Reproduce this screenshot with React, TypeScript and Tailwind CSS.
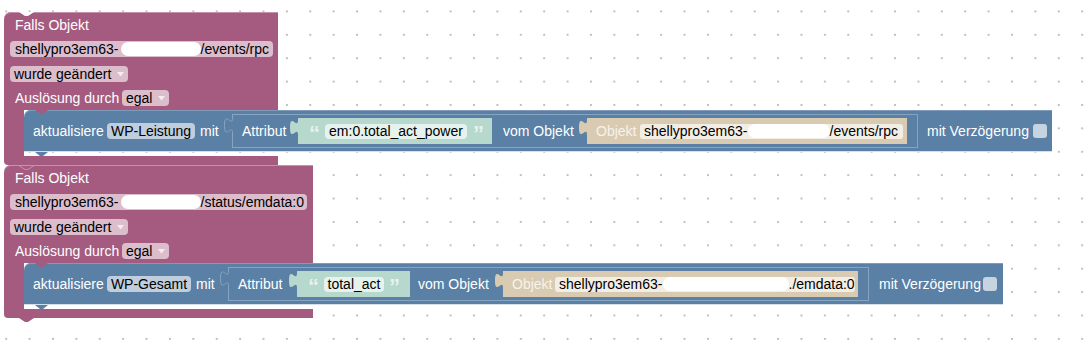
import React from "react";

function Arrow() {
  return (
    <svg width="7" height="5" viewBox="0 0 7 5" className="ml-[6px] shrink-0">
      <polygon points="0,0 7,0 3.5,4.5" fill="#f5ebf0" />
    </svg>
  );
}

function Blob({ className }: { className: string }) {
  return <span className={`inline-block h-[14px] shrink-0 rounded-full bg-white blur-[0.7px] ${className}`} />;
}

function PuzzleTab({ fill, stroke, className }: { fill: string; stroke?: string; className: string }) {
  return (
    <svg width="9" height="15" viewBox="0 0 9 15" className={`absolute overflow-visible ${className}`}>
      <path d="M9 0 H8 C8 10 0 -8 0 7.5 S8 5 8 15 H9 Z" fill={fill} />
      {stroke ? <path d="M8.5 0 C8.5 10 0.5 -8 0.5 7.5 S8.5 5 8.5 15" fill="none" stroke={stroke} strokeWidth="1" /> : null}
    </svg>
  );
}

function Trigger({
  widthClass,
  field,
  action,
  first,
}: {
  widthClass: string;
  field: React.ReactNode;
  action: React.ReactNode;
  first: boolean;
}) {
  return (
    <div className={`relative shrink-0 ${widthClass}`}>
      <div className="relative flex flex-col rounded-tl-[7px] bg-[#a55b80] pb-[4px] pt-[5px] shadow-[inset_0_1px_0_#c592ac]">
        {first ? (
          <svg width="15" height="4" viewBox="0 0 15 4" className="absolute left-[15px] top-0">
            <polygon points="0,0 6,4 9,4 15,0" fill="#ffffff" />
          </svg>
        ) : (
          <svg width="15" height="5" viewBox="0 0 15 5" className="absolute left-[15px] top-0">
            <polyline points="0,0.5 6,4.5 9,4.5 15,0.5" fill="none" stroke="#c592ac" strokeWidth="1" />
          </svg>
        )}
        <div className="h-[16px] pl-[11px]">Falls Objekt</div>
        <div className="mt-[8px] flex pl-[6px]">{field}</div>
        <div className="mt-[9px] flex pl-[6px]">
          <span className="flex h-[16px] items-center rounded-[4px] bg-[#dbbdcc] px-[4px] text-black">
            wurde geändert
            <Arrow />
          </span>
        </div>
        <div className="mt-[8px] flex h-[16px] items-center pl-[11px]">
          <span className="w-[107px] shrink-0 whitespace-nowrap">Auslösung durch</span>
          <span className="flex h-[16px] items-center rounded-[4px] bg-[#dbbdcc] px-[4px] text-black">
            egal
            <Arrow />
          </span>
        </div>
      </div>
      <div className="flex">
        <div className="w-[20px] shrink-0 bg-[#a55b80]" />
        <div className="flex shrink-0 flex-col">
          {action}
          <div className="h-[4px]" />
        </div>
      </div>
      <div className="relative h-[9px] rounded-bl-[4px] bg-[#a55b80]">
        {!first ? (
          <svg width="15" height="4" viewBox="0 0 15 4" className="absolute bottom-[-4px] left-[15px]">
            <polygon points="0,0 6,4 9,4 15,0" fill="#a55b80" />
          </svg>
        ) : null}
      </div>
    </div>
  );
}

function BlueShell({ widthClass, children }: { widthClass: string; children: React.ReactNode }) {
  return (
    <div
      className={`relative flex h-[42px] shrink-0 items-center whitespace-nowrap rounded-tl-[7px] bg-[#5b80a5] pl-[9px] shadow-[inset_0_1px_0_#7e9cba,inset_0_-1px_0_#d5dfe9] ${widthClass}`}
    >
      <svg width="13" height="4" viewBox="0 0 13 4" className="absolute left-[11px] top-0">
        <polygon points="0,0 5,4 8,4 13,0" fill="#a55b80" />
      </svg>
      <svg width="13" height="4" viewBox="0 0 13 4" className="absolute bottom-[-4px] left-[11px]">
        <polygon points="0,0 5,4 8,4 13,0" fill="#5b80a5" />
      </svg>
      {children}
    </div>
  );
}

function Quote({ children, className }: { children: React.ReactNode; className: string }) {
  return (
    <span
      className={`flex h-[16px] shrink-0 items-start overflow-visible font-['Liberation_Sans',Arial,sans-serif] text-[22px] font-bold leading-[22px] text-[#e6f2ed] ${className}`}
    >
      {children}
    </span>
  );
}

export default function App() {
  return (
    <div className="relative flex h-[342px] w-[1091px] flex-col overflow-hidden bg-white bg-[radial-gradient(circle,#bfbfbf_0.9px,transparent_1.4px)] bg-[length:23.4px_23.4px] bg-[position:-5.5px_-0.3px] pl-[4px] pt-[12px] font-['Liberation_Sans',Arial,sans-serif] text-[14px] leading-[16px] text-white">
      <Trigger
        first
        widthClass="w-[274px]"
        field={
          <span className="flex h-[16px] w-[263px] items-center whitespace-nowrap rounded-[4px] bg-[#dbbdcc] pl-[5px] text-black">
            <span>shellypro3em63-</span>
            <Blob className="ml-[2px] w-[80px]" />
            <span>/events/rpc</span>
          </span>
        }
        action={
          <BlueShell widthClass="w-[1028px]">
            <span className="w-[74px] shrink-0">aktualisiere</span>
            <span className="flex h-[16px] w-[88px] shrink-0 items-center justify-center rounded-[4px] bg-[#bfcddc] text-black">
              WP-Leistung
            </span>
            <span className="w-[37px] shrink-0 pl-[5px]">mit</span>
            <div className="relative flex h-[34px] w-[686px] shrink-0 items-center border border-[#87a4c1] bg-[#5b80a5] pl-[9px]">
              <PuzzleTab fill="#5b80a5" stroke="#87a4c1" className="left-[-9px] top-[3px]" />
              <span className="w-[56px] shrink-0">Attribut</span>
              <div className="relative flex h-[26px] w-[194px] shrink-0 items-center bg-[#b7d8cc] pl-[11px]">
                <PuzzleTab fill="#b7d8cc" className="left-[-8px] top-[2px]" />
                <Quote className="w-[16px]">“</Quote>
                <span className="flex h-[15px] w-[142px] shrink-0 items-center justify-center rounded-[4px] bg-[#e6f2ed] text-black">
                  em:0.total_act_power
                </span>
                <Quote className="pl-[6px]">”</Quote>
              </div>
              <span className="w-[95px] shrink-0 pl-[11px]">vom Objekt</span>
              <div className="relative flex h-[26px] w-[320px] shrink-0 items-center bg-[#d9cbb2] pl-[9px]">
                <PuzzleTab fill="#d9cbb2" className="left-[-8px] top-[2px]" />
                <span className="w-[44px] shrink-0 text-[#f7f2ea]">Objekt</span>
                <span className="flex h-[15px] w-[263px] shrink-0 items-center rounded-[3px] bg-[#f3eee5] pl-[4px] text-black">
                  <span>shellypro3em63-</span>
                  <Blob className="w-[82px]" />
                  <span>/events/rpc</span>
                </span>
              </div>
            </div>
            <span className="w-[115px] shrink-0 pl-[9px]">mit Verzögerung</span>
            <span className="h-[14px] w-[14px] shrink-0 rounded-[3px] bg-[#c6d3e1]" />
          </BlueShell>
        }
      />
      <Trigger
        first={false}
        widthClass="w-[309px]"
        field={
          <span className="flex h-[16px] w-[297px] items-center whitespace-nowrap rounded-[4px] bg-[#dbbdcc] pl-[5px] text-black">
            <span>shellypro3em63-</span>
            <Blob className="ml-[2px] w-[80px]" />
            <span>/status/emdata:0</span>
          </span>
        }
        action={
          <BlueShell widthClass="w-[979px]">
            <span className="w-[74px] shrink-0">aktualisiere</span>
            <span className="flex h-[16px] w-[84px] shrink-0 items-center justify-center rounded-[4px] bg-[#bfcddc] text-black">
              WP-Gesamt
            </span>
            <span className="w-[37px] shrink-0 pl-[5px]">mit</span>
            <div className="relative flex h-[34px] w-[641px] shrink-0 items-center border border-[#87a4c1] bg-[#5b80a5] pl-[9px]">
              <PuzzleTab fill="#5b80a5" stroke="#87a4c1" className="left-[-9px] top-[3px]" />
              <span className="w-[59px] shrink-0">Attribut</span>
              <div className="relative flex h-[26px] w-[113px] shrink-0 items-center bg-[#b7d8cc] pl-[11px]">
                <PuzzleTab fill="#b7d8cc" className="left-[-8px] top-[2px]" />
                <Quote className="w-[16px]">“</Quote>
                <span className="flex h-[15px] w-[60px] shrink-0 items-center justify-center rounded-[4px] bg-[#e6f2ed] text-black">
                  total_act
                </span>
                <Quote className="pl-[5px]">”</Quote>
              </div>
              <span className="w-[93px] shrink-0 pl-[8px]">vom Objekt</span>
              <div className="relative flex h-[26px] w-[355px] shrink-0 items-center bg-[#d9cbb2] pl-[9px]">
                <PuzzleTab fill="#d9cbb2" className="left-[-8px] top-[2px]" />
                <span className="w-[43px] shrink-0 text-[#f7f2ea]">Objekt</span>
                <span className="flex h-[15px] w-[300px] shrink-0 items-center rounded-[3px] bg-[#f3eee5] pl-[4px] text-black">
                  <span>shellypro3em63-</span>
                  <Blob className="w-[126px]" />
                  <span>./emdata:0</span>
                </span>
              </div>
            </div>
            <span className="w-[114px] shrink-0 pl-[10px]">mit Verzögerung</span>
            <span className="h-[14px] w-[14px] shrink-0 rounded-[3px] bg-[#c6d3e1]" />
          </BlueShell>
        }
      />
    </div>
  );
}
